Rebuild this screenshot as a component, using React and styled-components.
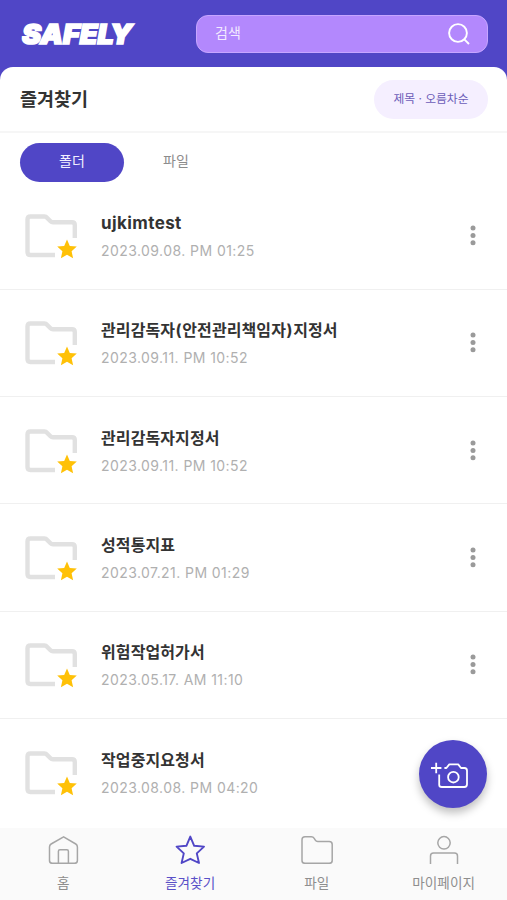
import React from "react";
import styled, { createGlobalStyle } from "styled-components";

const Global = createGlobalStyle`
  * { box-sizing: border-box; }
  body { margin: 0; background: #fff; }
  button { border: 0; padding: 0; background: none; font: inherit; color: inherit; }
`;

const Page = styled.div`
  position: relative;
  display: flex;
  flex-direction: column;
  width: 507px;
  height: 900px;
  overflow: hidden;
  background: #5046c6;
  font-family: Inter, "Noto Sans CJK KR", sans-serif;
`;

const TopBar = styled.header`
  display: flex;
  flex: none;
  align-items: flex-start;
  justify-content: space-between;
  height: 67px;
  padding: 15px 19px 0 22px;
`;

const Logo = styled.div`
  padding-top: 5px;
  font-size: 26.5px;
  line-height: 28px;
  font-weight: 900;
  font-style: italic;
  letter-spacing: 0;
  color: #fff;
  -webkit-text-stroke: 1.7px #fff;
  transform: scaleX(1.08);
  transform-origin: left center;
`;

const Search = styled.div`
  display: flex;
  align-items: center;
  justify-content: space-between;
  width: 292px;
  height: 38px;
  padding: 0 17px 1px 18px;
  border: 1px solid #c6a5ff;
  border-radius: 12px;
  background: #b388fd;
  color: #f3eaff;
  font-size: 14px;
  line-height: 20px;
`;

const SearchHint = styled.span`
  margin-top: -2px;
`;

const Sheet = styled.main`
  display: flex;
  flex: 1;
  flex-direction: column;
  min-height: 0;
  overflow: hidden;
  border-radius: 13px 13px 0 0;
  background: #fff;
`;

const TitleBar = styled.div`
  display: flex;
  flex: none;
  align-items: center;
  justify-content: space-between;
  height: 66px;
  padding: 0 19px 0 20px;
  border-bottom: 2px solid #f6f6f6;
`;

const Title = styled.h1`
  margin: 0;
  font-size: 18.5px;
  line-height: 26px;
  font-weight: 700;
  color: #333;
`;

const SortButton = styled.button`
  width: 114px;
  height: 39px;
  border-radius: 20px;
  background: #f5efff;
  color: #6c5cb8;
  font-size: 11.8px;
  line-height: 18px;
`;

const Tabs = styled.div`
  display: flex;
  flex: none;
  height: 49.3px;
  padding: 10px 20px 0;
`;

const Tab = styled.button`
  width: 104px;
  height: 39px;
  padding-bottom: 4px;
  border-radius: 20px;
  background: ${(p) => (p.$active ? "#5046c6" : "transparent")};
  color: ${(p) => (p.$active ? "#f1efff" : "#8c8c8c")};
  font-size: 14px;
  line-height: 20px;
`;

const List = styled.ul`
  flex: 1;
  min-height: 0;
  margin: 0;
  padding: 0;
  overflow: hidden;
  list-style: none;
`;

const Row = styled.li`
  display: flex;
  align-items: flex-start;
  height: 107.4px;
  padding: 27.6px 22px 0 20px;
  border-bottom: 1px solid #f0f0f0;

  &:last-child {
    border-bottom: 0;
  }
`;

const Info = styled.div`
  display: flex;
  flex: 1;
  flex-direction: column;
  padding-left: 19px;
`;

const Name = styled.div`
  height: 28px;
  font-size: ${(p) => (p.$latin ? "17px" : "16px")};
  line-height: 26px;
  font-weight: 700;
  letter-spacing: ${(p) => (p.$latin ? "0.4px" : "0.1px")};
  color: #333;

  em {
    margin: 0 0.5px;
    font-style: normal;
  }
`;

const DateText = styled.div`
  font-size: 14px;
  line-height: 25px;
  letter-spacing: 0.43px;
  color: #b0b0b0;
`;

const MoreButton = styled.button`
  display: flex;
  flex-direction: column;
  align-items: center;
  gap: 2px;
  width: 24px;
  margin-top: 15px;
`;

const MoreIcon = () => (
  <svg width="6" height="21" viewBox="0 0 6 21" fill="#9a9a9a">
    <circle cx="3" cy="3" r="2.5" />
    <circle cx="3" cy="10.4" r="2.5" />
    <circle cx="3" cy="17.8" r="2.5" />
  </svg>
);

const Fab = styled.button`
  position: absolute;
  right: 20px;
  bottom: 92px;
  display: flex;
  align-items: center;
  justify-content: center;
  width: 68px;
  height: 68px;
  padding: 2px 7px 0 0;
  border-radius: 50%;
  background: #5046c6;
  box-shadow: 0 5px 9px rgba(0, 0, 0, 0.25);
`;

const BottomNav = styled.nav`
  display: flex;
  flex: none;
  height: 72px;
  padding-top: 4px;
  background: #fafafa;
`;

const NavItem = styled.button`
  display: flex;
  flex: 1;
  flex-direction: column;
  align-items: center;
  color: ${(p) => (p.$active ? "#5046c6" : "#a6a6a6")};
`;

const NavLabel = styled.span`
  margin-top: 9px;
  font-size: 13.6px;
  line-height: 20px;
  color: ${(p) => (p.$active ? "#5a50c8" : "#8e8e8e")};
`;

const SearchIcon = () => (
  <svg width="22" height="22" viewBox="0 0 22 22" fill="none" stroke="#fff" strokeWidth="1.9">
    <circle cx="10" cy="10" r="8.9" />
    <path d="M16.3 16.3 L21 21" />
  </svg>
);

const FavoriteFolder = () => (
  <svg width="62" height="52" viewBox="0 0 62 52" fill="none">
    <path
      d="M35 45 H10.5 Q7.5 45 7.5 42 V9.5 Q7.5 6.5 10.5 6.5 H24.5 Q26 6.5 27 7.7 L30.5 11.2 Q31.5 12.2 33 12.2 H52 Q54.8 12.2 54.8 15 V28"
      stroke="#e1e1e1"
      strokeWidth="4.4"
    />
    <path
      d="M47 29.4 L49.8 36 L56.8 36.6 L51.6 41.3 L53.1 48.2 L47 44.7 L40.9 48.2 L42.4 41.3 L37.2 36.6 L44.2 36 Z"
      fill="#ffc107"
    />
  </svg>
);

const CameraIcon = () => (
  <svg width="38" height="26" viewBox="0 0 38 26" fill="none" stroke="#fff" strokeWidth="1.8" strokeLinejoin="round">
    <path d="M5.2 0.8 V11.3 M0 6 H10.4" />
    <path d="M8.2 12.5 V22.7 Q8.2 25 10.8 25 H33.4 Q36 25 36 22.3 V8.7 Q36 6 33.4 6 H30 L27.2 2.4 H18.3 L15.4 6 H13.4" />
    <circle cx="22.4" cy="15.2" r="5.3" />
  </svg>
);

const NavIcon = ({ children }) => (
  <svg width="34" height="32" viewBox="0 0 34 32" fill="none" stroke="currentColor" strokeWidth="1.5" strokeLinejoin="round">
    {children}
  </svg>
);

const HomeIcon = () => (
  <NavIcon>
    <path d="M17.6 4.8 L29.8 12 Q31.4 13 31.4 15 V28.4 Q31.4 31.3 28.5 31.3 H6.4 Q3.5 31.3 3.5 28.4 V15 Q3.5 13 5.1 12 Z" />
    <path d="M12.4 31 V19.2 Q12.4 17.7 13.9 17.7 H20.9 Q22.4 17.7 22.4 19.2 V31" />
  </NavIcon>
);

const StarIcon = () => (
  <NavIcon>
    <path strokeWidth="1.9" d="M17.3 4.6 L21.2 13.8 L31 14.6 L23.8 21.4 L26 31 L17.3 26.8 L8.6 31 L10.8 21.4 L3.6 14.6 L13.4 13.8 Z" />
  </NavIcon>
);

const FolderIcon = () => (
  <NavIcon>
    <path d="M5 4.7 H11.3 Q13.2 4.7 14.2 6.4 L15.3 8.2 Q16.1 9.5 17.7 9.5 H29.2 Q32.2 9.5 32.2 12.5 V28.4 Q32.2 31.3 29.2 31.3 H5 Q2 31.3 2 28.4 V7.7 Q2 4.7 5 4.7 Z" />
  </NavIcon>
);

const UserIcon = () => (
  <NavIcon>
    <circle cx="17" cy="10.8" r="6.2" />
    <path d="M3.5 32 V24 Q3.5 21 6.5 21 H27.5 Q30.5 21 30.5 24 V32" />
  </NavIcon>
);

const folders = [
  { name: "ujkimtest", date: "2023.09.08. PM 01:25", latin: true, menu: true },
  {
    name: (
      <>
        관리감독자<em>(</em>안전관리책임자<em>)</em>지정서
      </>
    ),
    date: "2023.09.11. PM 10:52",
    menu: true,
  },
  { name: "관리감독자지정서", date: "2023.09.11. PM 10:52", menu: true },
  { name: "성적통지표", date: "2023.07.21. PM 01:29", menu: true },
  { name: "위험작업허가서", date: "2023.05.17. AM 11:10", menu: true },
  { name: "작업중지요청서", date: "2023.08.08. PM 04:20" },
];

const navItems = [
  { label: "홈", Icon: HomeIcon },
  { label: "즐겨찾기", Icon: StarIcon, active: true },
  { label: "파일", Icon: FolderIcon },
  { label: "마이페이지", Icon: UserIcon },
];

export default function App() {
  return (
    <Page>
      <Global />
      <TopBar>
        <Logo>SAFELY</Logo>
        <Search>
          <SearchHint>검색</SearchHint>
          <SearchIcon />
        </Search>
      </TopBar>
      <Sheet>
        <TitleBar>
          <Title>즐겨찾기</Title>
          <SortButton>제목 · 오름차순</SortButton>
        </TitleBar>
        <Tabs>
          <Tab $active>폴더</Tab>
          <Tab>파일</Tab>
        </Tabs>
        <List>
          {folders.map((f, i) => (
            <Row key={i}>
              <FavoriteFolder />
              <Info>
                <Name $latin={f.latin}>{f.name}</Name>
                <DateText>{f.date}</DateText>
              </Info>
              {f.menu && (
                <MoreButton aria-label="더보기">
                  <MoreIcon />
                </MoreButton>
              )}
            </Row>
          ))}
        </List>
      </Sheet>
      <BottomNav>
        {navItems.map(({ label, Icon, active }) => (
          <NavItem key={label} $active={active}>
            <Icon />
            <NavLabel $active={active}>{label}</NavLabel>
          </NavItem>
        ))}
      </BottomNav>
      <Fab aria-label="사진 추가">
        <CameraIcon />
      </Fab>
    </Page>
  );
}
